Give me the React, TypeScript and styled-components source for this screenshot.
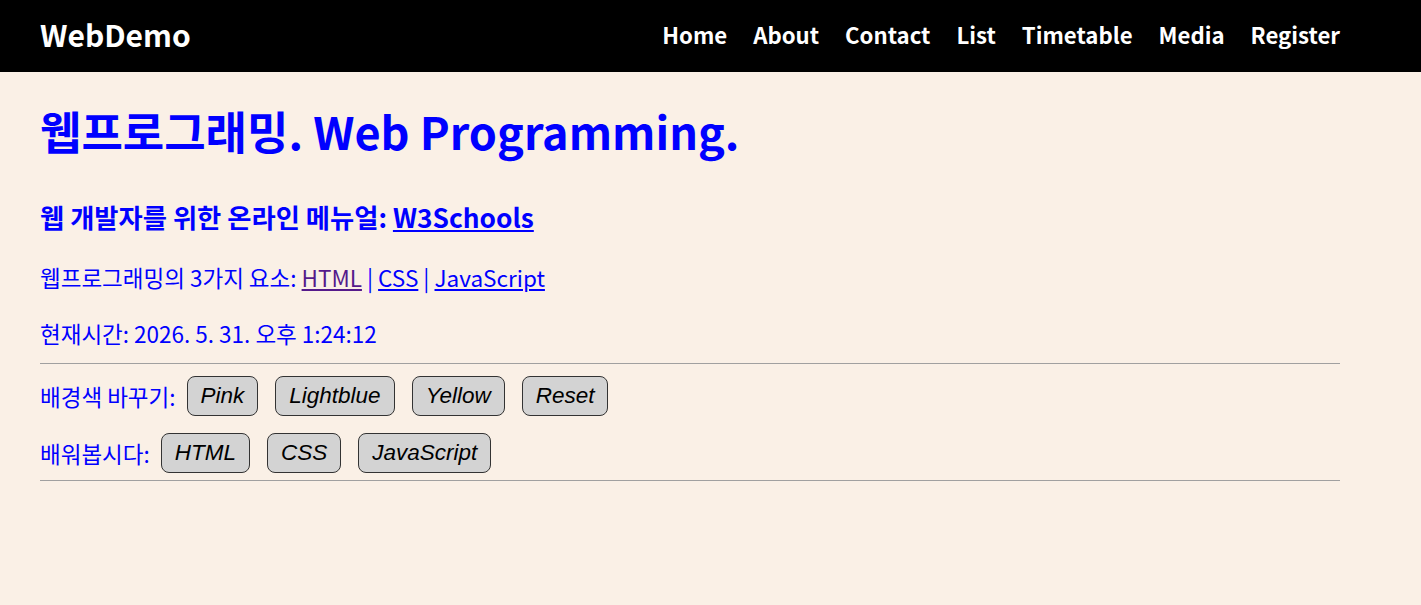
import { createGlobalStyle, styled } from "styled-components";

const GlobalStyle = createGlobalStyle`
  html, body {
    margin: 0;
    padding: 0;
    background: #faf0e6;
    font-family: "Noto Sans CJK KR", "Noto Sans", sans-serif;
  }
`;

const Header = styled.header`
  height: 72px;
  box-sizing: border-box;
  padding-bottom: 4px;
  background: #000;
  display: flex;
  align-items: center;
`;

const HeaderInner = styled.div`
  width: 1300px;
  margin-left: 40px;
  display: flex;
  align-items: center;
  justify-content: space-between;
`;

const Logo = styled.a`
  color: #fff;
  font-size: 30px;
  font-weight: 700;
  text-decoration: none;
`;

const Nav = styled.nav`
  display: flex;
  gap: 26px;
`;

const NavLink = styled.a`
  color: #fff;
  font-size: 22.2px;
  font-weight: 700;
  text-decoration: none;
`;

const Main = styled.main`
  width: 1300px;
  margin-left: 40px;
  color: #00f;
`;

const Title = styled.h1`
  margin: 28px 0 0;
  font-size: 45px;
  font-weight: 700;
  line-height: 62px;
`;

const SubTitle = styled.h2`
  margin: 38px 0 0;
  font-size: 26.3px;
  font-weight: 700;
  line-height: 34px;
`;

const Text = styled.p`
  margin: 26px 0 0;
  font-size: 22.5px;
  line-height: 34px;

  & + & {
    margin-top: 22px;
  }
`;

const Link = styled.a<{ $visited?: boolean }>`
  color: ${(p) => (p.$visited ? "#551a8b" : "#00f")};
`;

const Rule = styled.hr<{ $gap?: number }>`
  margin: ${(p) => p.$gap ?? 13}px 0 0;
  border: none;
  border-top: 1px solid #a0a0a0;
`;

const ButtonRow = styled.div`
  display: flex;
  align-items: center;
  gap: 17px;
  margin-top: 12px;
  font-size: 22.5px;

  & + & {
    margin-top: 17px;
  }
`;

const Label = styled.span`
  margin-right: -6px;
`;

const Button = styled.button`
  height: 40px;
  padding: 0 13px;
  background: #d3d3d3;
  border: 1px solid #333;
  border-radius: 8px;
  font-family: "Liberation Sans", Arial, sans-serif;
  font-style: italic;
  font-size: 22.5px;
  color: #000;
`;

const navItems = ["Home", "About", "Contact", "List", "Timetable", "Media", "Register"];

export default function App() {
  return (
    <>
      <GlobalStyle />
      <Header>
        <HeaderInner>
          <Logo href="#">WebDemo</Logo>
          <Nav>
            {navItems.map((item) => (
              <NavLink key={item} href="#">
                {item}
              </NavLink>
            ))}
          </Nav>
        </HeaderInner>
      </Header>
      <Main>
        <Title>웹프로그래밍. Web Programming.</Title>
        <SubTitle>
          웹 개발자를 위한 온라인 메뉴얼: <Link href="#">W3Schools</Link>
        </SubTitle>
        <Text>
          웹프로그래밍의 3가지 요소: <Link href="#" $visited>HTML</Link> | <Link href="#">CSS</Link> |{" "}
          <Link href="#">JavaScript</Link>
        </Text>
        <Text>현재시간: 2026. 5. 31. 오후 1:24:12</Text>
        <Rule />
        <ButtonRow>
          <Label>배경색 바꾸기:</Label>
          <Button>Pink</Button>
          <Button>Lightblue</Button>
          <Button>Yellow</Button>
          <Button>Reset</Button>
        </ButtonRow>
        <ButtonRow>
          <Label>배워봅시다:</Label>
          <Button>HTML</Button>
          <Button>CSS</Button>
          <Button>JavaScript</Button>
        </ButtonRow>
        <Rule $gap={7} />
      </Main>
    </>
  );
}
